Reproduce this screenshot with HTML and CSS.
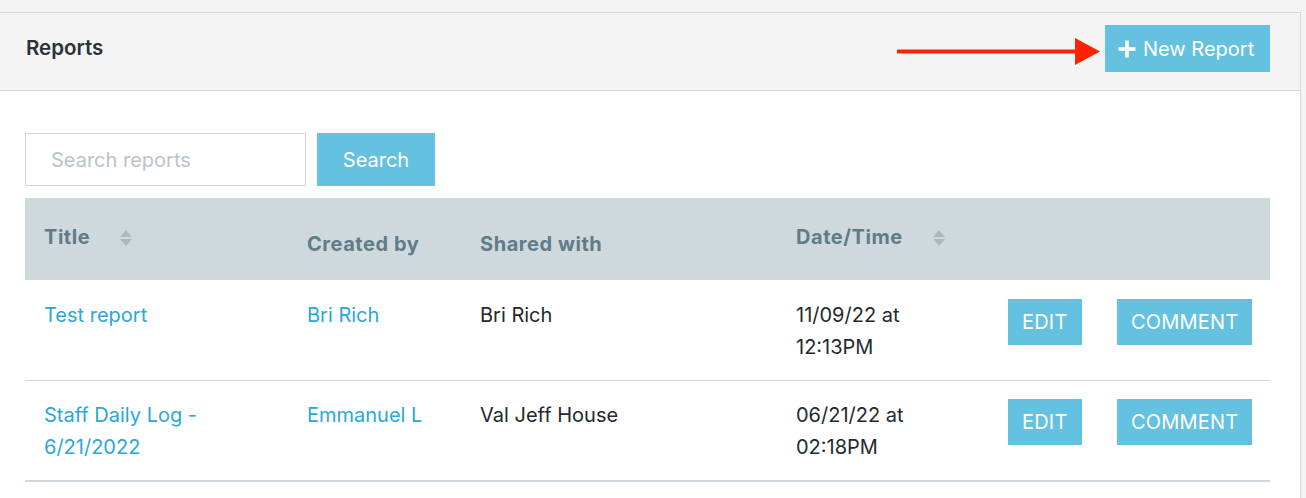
FILE: index.html
```html
<!DOCTYPE html>
<html lang="en">
<head>
<meta charset="utf-8">
<title>Reports</title>
<link rel="stylesheet" href="styles.css">
</head>
<body>
<div class="panel">
  <div class="panel-header">
    <h2 class="panel-title">Reports</h2>
    <div class="header-actions">
      <svg class="annot-arrow" width="204" height="28" viewBox="0 0 204 28" aria-hidden="true">
        <rect x="0" y="11.5" width="182" height="4" fill="#ff2200"/>
        <polygon points="178,0 203,13.5 178,27" fill="#ff2200"/>
      </svg>
      <button class="btn btn-new">
        <svg class="plus" width="18" height="18" viewBox="0 0 18 18" aria-hidden="true">
          <rect x="7.2" y="0.5" width="3.6" height="17" fill="#fff"/>
          <rect x="0.5" y="7.2" width="17" height="3.6" fill="#fff"/>
        </svg>
        New Report
      </button>
    </div>
  </div>
  <div class="panel-body">
    <form class="search-row">
      <input class="search-input" type="text" placeholder="Search reports">
      <button class="btn btn-search" type="button">Search</button>
    </form>
    <table class="reports">
      <colgroup>
        <col style="width:263px">
        <col style="width:173px">
        <col style="width:316px">
        <col style="width:212px">
        <col style="width:109px">
        <col style="width:172px">
      </colgroup>
      <thead>
        <tr>
          <th class="sortable"><span class="th-label">Title</span><span class="sort"><i class="up"></i><i class="down"></i></span></th>
          <th>Created by</th>
          <th>Shared with</th>
          <th class="sortable"><span class="th-label">Date/Time</span><span class="sort"><i class="up"></i><i class="down"></i></span></th>
          <th></th>
          <th></th>
        </tr>
      </thead>
      <tbody>
        <tr>
          <td><a class="link" href="#">Test report</a></td>
          <td><a class="link" href="#">Bri Rich</a></td>
          <td>Bri Rich</td>
          <td>11/09/22 at<br>12:13PM</td>
          <td><button class="btn btn-row">EDIT</button></td>
          <td><button class="btn btn-row">COMMENT</button></td>
        </tr>
        <tr>
          <td><a class="link" href="#">Staff Daily Log -<br>6/21/2022</a></td>
          <td><a class="link" href="#">Emmanuel L</a></td>
          <td>Val Jeff House</td>
          <td>06/21/22 at<br>02:18PM</td>
          <td><button class="btn btn-row">EDIT</button></td>
          <td><button class="btn btn-row">COMMENT</button></td>
        </tr>
      </tbody>
    </table>
  </div>
</div>
</body>
</html>
```

FILE: styles.css
```css
* { box-sizing: border-box; }

html, body {
  margin: 0;
  padding: 0;
  background: #f4f4f4;
  font-family: Inter, "Noto Sans", "Liberation Sans", sans-serif;
  color: #24292e;
}

.panel {
  margin-top: 12px;
  width: 1301px;
  border-top: 1px solid #d1dadf;
  border-right: 1px solid #d1dadf;
  background: #fff;
  height: 486px;
}

.panel-header {
  display: flex;
  align-items: center;
  justify-content: space-between;
  height: 78px;
  padding: 12px 30px 18px 26px;
  background: #f4f4f4;
  border-bottom: 1px solid #d1dadf;
}

.panel-title {
  margin: 0 0 2px 0;
  font-size: 20.5px;
  font-weight: 600;
  color: #2b3238;
}

.header-actions {
  display: flex;
  align-items: center;
}

.annot-arrow {
  display: block;
  margin-right: 4px;
  margin-top: 6px;
}

.btn {
  border: 0;
  background: #64c1e0;
  color: #fff;
  font-family: inherit;
  font-size: 20px;
  cursor: pointer;
  padding: 0;
}

.btn-new {
  display: flex;
  align-items: center;
  height: 47px;
  width: 165px;
  padding: 0 0 0 13px;
  gap: 7px;
}

.plus { display: block; }

.panel-body {
  padding: 42px 30px 0 25px;
}

.search-row {
  display: flex;
  gap: 11px;
  margin: 0 0 12px 0;
}

.search-input {
  width: 281px;
  height: 53px;
  border: 1px solid #d6d6d6;
  padding: 0 25px;
  font-family: inherit;
  font-size: 20px;
  color: #24292e;
  outline: none;
}

.search-input::placeholder {
  color: #b8c4cb;
}

.btn-search {
  width: 118px;
  height: 53px;
}

.reports {
  width: 1245px;
  border-collapse: collapse;
  table-layout: fixed;
  border-bottom: 2px solid #cfd8dc;
}

.reports th {
  background: #cfd8dc;
  color: #5f7c89;
  font-size: 20px;
  font-weight: 700;
  letter-spacing: 0.55px;
  text-align: left;
  line-height: 32px;
  padding: 30px 19px 20px 19px;
  vertical-align: top;
  height: 82px;
  white-space: nowrap;
}

.reports th.sortable {
  padding-top: 23px;
}

.th-label {
  display: inline-block;
  vertical-align: top;
}

.sort {
  display: inline-flex;
  flex-direction: column;
  gap: 2px;
  margin-left: 30px;
  margin-top: 9px;
  vertical-align: top;
}

.sort i {
  display: block;
  width: 0;
  height: 0;
  border-left: 6px solid transparent;
  border-right: 6px solid transparent;
}

.sort .up { border-bottom: 7px solid #aab9c1; }
.sort .down { border-top: 7px solid #aab9c1; }

.reports td {
  font-size: 20px;
  line-height: 32px;
  padding: 18px 19px 17px 19px;
  vertical-align: top;
  border-top: 1px solid #cfd8dc;
  color: #24292e;
}

.reports thead + tbody tr:first-child td {
  border-top: 0;
  padding-top: 19px;
}

.link {
  color: #2ba7d9;
  text-decoration: none;
}

.btn-row {
  height: 46px;
  padding: 0 14px;
  letter-spacing: 0.2px;
}
```
